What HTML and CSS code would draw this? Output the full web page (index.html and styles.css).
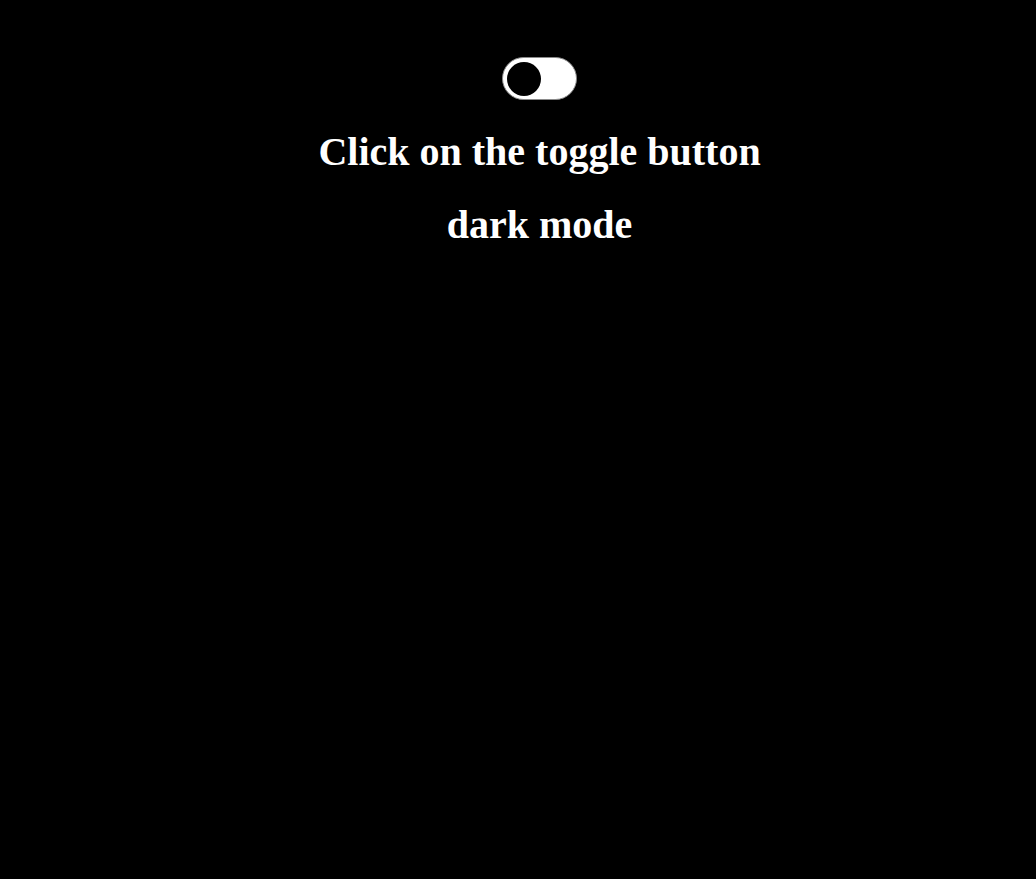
FILE: index.html
```html
<!DOCTYPE html>
<html>
<head>
<meta charset="utf-8">
<link rel="stylesheet" href="styles.css">
</head>
<body>
<div class="page">
  <div class="toggle"><span class="knob"></span></div>
  <h1 class="title">Click on the toggle button</h1>
  <h1 class="title">dark mode</h1>
</div>
</body>
</html>
```
FILE: styles.css
```css
html, body {
  margin: 0;
  padding: 0;
  background: #000;
  height: 100%;
}
.page {
  padding: 57px 0 0 43px;
  text-align: center;
  font-family: "Liberation Serif", "Times New Roman", serif;
  color: #fff;
}
.toggle {
  display: inline-flex;
  align-items: center;
  box-sizing: border-box;
  width: 75px;
  height: 43px;
  padding: 0 4px;
  background: #fff;
  border: 1px solid #8a8a8a;
  border-radius: 22px;
  vertical-align: top;
}
.knob {
  width: 34px;
  height: 34px;
  border-radius: 50%;
  background: #000;
}
.title {
  font-size: 40px;
  font-weight: bold;
  margin: 28px 0 0;
  line-height: normal;
}
.title + .title {
  margin-top: 26px;
}
```
